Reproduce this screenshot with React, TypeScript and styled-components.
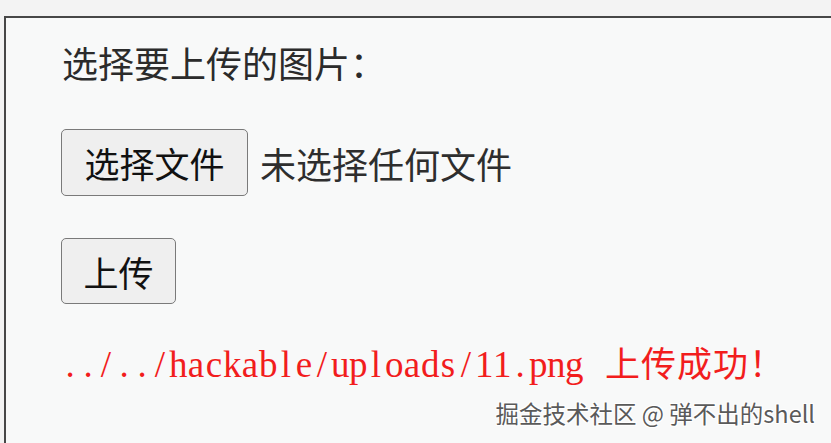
import React from "react";
import styled, { createGlobalStyle } from "styled-components";

const GlobalStyle = createGlobalStyle`
  html, body {
    margin: 0;
    padding: 0;
    background: #f3f3f3;
    overflow: hidden;
    width: 831px;
    height: 443px;
  }
`;

const Page = styled.div`
  position: relative;
  width: 831px;
  height: 443px;
  overflow: hidden;
`;

const Panel = styled.div`
  margin: 16px 0 0 4px;
  width: 900px;
  height: 500px;
  box-sizing: border-box;
  border: 2px solid #474747;
  background: #f8f9f9;
  padding: 24px 0 0 55px;
  display: flex;
  flex-direction: column;
  align-items: flex-start;
`;

const Heading = styled.div`
  font-family: "Noto Sans CJK SC", sans-serif;
  font-size: 36px;
  line-height: 40px;
  color: #2b2b2b;
  margin-left: 1px;
`;

const FileRow = styled.div`
  margin-top: 47px;
  display: flex;
  align-items: center;
  gap: 12px;
`;

const Button = styled.button<{ $w: number; $h: number }>`
  width: ${(p) => p.$w}px;
  height: ${(p) => p.$h}px;
  padding: 0;
  box-sizing: border-box;
  border: 1.5px solid #7a7a7a;
  border-radius: 5px;
  background: #efefef;
  color: #111;
  font-family: "Noto Sans CJK SC", sans-serif;
  font-size: 35px;
  line-height: 1;
  display: flex;
  align-items: center;
  justify-content: center;
`;

const FileName = styled.span`
  font-family: "Noto Sans CJK SC", sans-serif;
  font-size: 36px;
  line-height: 40px;
  color: #2e2e2e;
`;

const UploadWrap = styled.div`
  margin-top: 42px;
`;

const Result = styled.div`
  margin-top: 38px;
  display: flex;
  align-items: baseline;
  color: #f21d1d;
  line-height: 40px;
`;

const MonoCell = styled.span`
  display: inline-block;
  width: 18px;
  text-align: center;
  font-family: "Liberation Serif", serif;
  font-size: 37px;
`;

const CjkPart = styled.span`
  margin-left: 4px;
  font-family: "Noto Sans CJK SC", sans-serif;
  font-size: 35px;
  font-weight: 400;
  letter-spacing: 1px;
`;

const Watermark = styled.div`
  position: absolute;
  right: 16px;
  top: 397px;
  font-family: "Noto Sans CJK SC", sans-serif;
  font-size: 23.5px;
  line-height: 32px;
  color: #5a5a5a;
  text-shadow: 1px 1px 0 #ffffff, -1px -1px 0 #ffffff, 1px -1px 0 #ffffff, -1px 1px 0 #ffffff;
  white-space: nowrap;
`;

const path = "../../hackable/uploads/11.png ";

export default function App() {
  return (
    <Page>
      <GlobalStyle />
      <Panel>
        <Heading>选择要上传的图片：</Heading>
        <FileRow>
          <Button $w={187} $h={67}>选择文件</Button>
          <FileName>未选择任何文件</FileName>
        </FileRow>
        <UploadWrap>
          <Button $w={115} $h={66}>上传</Button>
        </UploadWrap>
        <Result>
          {path.split("").map((c, i) => (
            <MonoCell key={i}>{c === " " ? "\u00a0" : c}</MonoCell>
          ))}
          <CjkPart>上传成功！</CjkPart>
        </Result>
      </Panel>
      <Watermark>掘金技术社区 @ 弹不出的shell</Watermark>
    </Page>
  );
}
